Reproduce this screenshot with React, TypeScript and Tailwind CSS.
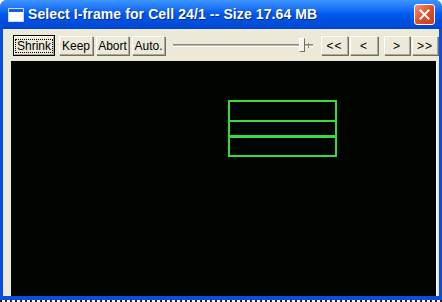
import React from 'react';

const btn =
  "h-[19px] flex items-center justify-center bg-[#ece9d8] text-black text-[12px] leading-none border border-t-white border-l-white border-r-[#aca899] border-b-[#aca899] shadow-[1px_1px_0_#716f64]";

function NavButton({ label, w }: { label: string; w: string }) {
  return <div className={`${btn} ${w} text-[11px] tracking-[1px]`}>{label}</div>;
}

export default function App() {
  return (
    <div className="w-[442px] h-[302px] bg-white overflow-hidden" style={{ fontFamily: '"Liberation Sans", Arial, sans-serif' }}>
      <div className="h-[300px] flex flex-col rounded-t-[7px] bg-[#0a4ee0] overflow-hidden">
        {/* title bar */}
        <div className="h-[30px] flex items-center pl-[8px] pr-[7px] bg-gradient-to-b from-[#3d95ff] via-[#0058ee] to-[#0046d0]">
          <svg width="16" height="14" viewBox="0 0 16 14" className="shrink-0">
            <rect x="0.5" y="0.5" width="15" height="13" fill="#ffffff" stroke="#c8d8f0" />
            <rect x="1" y="1" width="14" height="3" fill="#1a5fd8" />
          </svg>
          <div className="ml-[4px] text-white font-bold text-[14px] tracking-[0.1px] [text-shadow:1px_1px_0_#0a2a80]">
            Select I-frame for Cell 24/1 -- Size 17.64 MB
          </div>
          <div className="ml-auto w-[21px] h-[21px] rounded-[3px] border border-white bg-gradient-to-br from-[#f29477] via-[#e0502a] to-[#c6401c] flex items-center justify-center">
            <svg width="11" height="11" viewBox="0 0 11 11">
              <path d="M1.5 1.5 L9.5 9.5 M9.5 1.5 L1.5 9.5" stroke="#ffffff" strokeWidth="2" strokeLinecap="square" />
            </svg>
          </div>
        </div>
        {/* body */}
        <div className="flex-1 flex flex-col ml-[3px] mr-[3px] mb-[4px] bg-[#ece9d8]">
          <div className="h-[31px] flex items-center pl-[10px] pt-[2px]">
            <div className="h-[21px] w-[42px] border border-black flex">
              <div className="flex-1 flex items-center justify-center bg-[#ece9d8] text-[12px] leading-none border border-t-white border-l-white border-r-[#aca899] border-b-[#aca899]">
                <span className="border border-dotted border-black px-[1px]">Shrink</span>
              </div>
            </div>
            <div className={`${btn} w-[34px] ml-[4px]`}>Keep</div>
            <div className={`${btn} w-[33px] ml-[3px]`}>Abort</div>
            <div className={`${btn} w-[33px] ml-[3px]`}>Auto.</div>
            {/* slider */}
            <div className="relative w-[140px] h-[20px] ml-[8px]">
              <div className="absolute left-0 right-0 top-[8px] h-[3px] border-t border-t-[#8c8a7e] border-b border-b-white bg-[#b9b6a8]" />
              <div className="absolute right-[4px] top-[7px] w-[4px] h-[5px] border-r border-[#8c8a7e]" />
              <div className="absolute left-[126px] top-[2px] w-[6px] h-[14px] bg-[#f4f3ee] border border-t-white border-l-white border-r-[#716f64] border-b-[#716f64]" />
            </div>
            <div className="flex ml-[8px] gap-[2px]">
              <NavButton label="<<" w="w-[27px]" />
              <NavButton label="<" w="w-[28px]" />
              <div className="w-[2px]" />
              <NavButton label=">" w="w-[26px]" />
              <NavButton label=">>" w="w-[26px]" />
            </div>
          </div>
          <div className="flex-1 ml-[8px] mr-[2px] mt-[1px] bg-[#000500] border-r border-r-white">
            <svg width="425" height="235" viewBox="0 0 425 235">
              <g fill="none" stroke="#3cd83c" strokeWidth="2">
                <rect x="218" y="40" width="107" height="20" />
                <rect x="218" y="60" width="107" height="15" />
                <rect x="218" y="76" width="107" height="19" />
              </g>
            </svg>
          </div>
        </div>
      </div>
      <div className="h-[2px] bg-[repeating-linear-gradient(90deg,#222_0_2px,#fff_2px_5px)]" />
    </div>
  );
}
